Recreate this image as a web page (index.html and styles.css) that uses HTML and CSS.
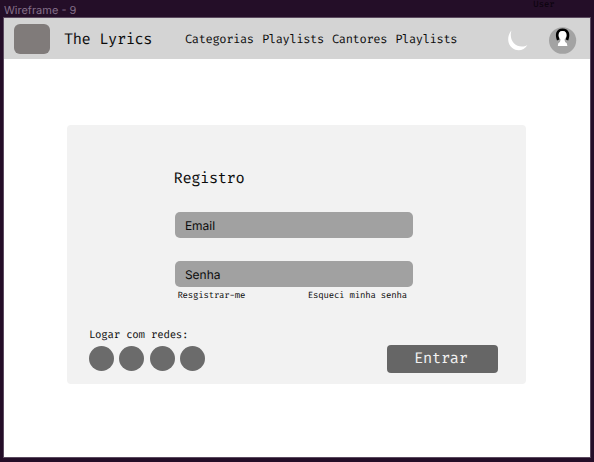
FILE: index.html
```html
<!DOCTYPE html>
<html lang="pt">
<head>
<meta charset="utf-8">
<title>The Lyrics - Registro</title>
<link rel="stylesheet" href="styles.css">
</head>
<body>
<div class="canvas-bar"><span class="frame-name">Wireframe - 9</span><span class="layer-name">User</span></div>
<div class="frame">
  <header class="header">
    <div class="logo"></div>
    <div class="brand">The Lyrics</div>
    <nav class="nav"><a>Categorias</a><a>Playlists</a><a>Cantores</a><a>Playlists</a></nav>
    <svg class="moon" width="20" height="21" viewBox="0 0 20 21"><path d="M3.400.4C-1.200 6-.8 14 4.300 18.100c5 3.900 12 2.400 15.100-3.100C15.300 17.500 9.600 17 5.900 13.300 2.500 9.800 2.200 4.500 3.400.4Z" fill="#fff"/></svg>
    <svg class="avatar" width="28" height="27" viewBox="0 0 28 27"><ellipse cx="13.600" cy="13.500" rx="13.600" ry="13.300" fill="#a3a3a3"/><path d="M9.200 13C7.100 7.500 8.300 2.700 13.600 2.700s6.500 4.800 4.400 10.300" fill="none" stroke="#000" stroke-width="2.600"/><path d="M13.600 4.100c-2.900 0-4.100 2-3.900 4.400.2 1.800.9 2.900 1.800 3.700 0 2-.6 3-2.200 4L8.800 19h9.600l-.6-2.800c-1.600-1-2.200-2-2.200-4 .9-.8 1.600-1.900 1.800-3.700C17.600 6.100 16.400 4.100 13.600 4.100Z" fill="#fff"/></svg>
  </header>
  <main class="main">
    <form class="card">
      <h1>Registro</h1>
      <div class="field">Email</div>
      <div class="field">Senha</div>
      <div class="links"><a>Resgistrar-me</a><a>Esqueci minha senha</a></div>
      <div class="bottom">
        <div class="social">
          <div class="social-label">Logar com redes:</div>
          <div class="dots"><i></i><i></i><i></i><i></i></div>
        </div>
        <div class="submit">Entrar</div>
      </div>
    </form>
  </main>
</div>
</body>
</html>
```
FILE: styles.css
```css
* { box-sizing: border-box; }
body {
  margin: 0;
  width: 594px;
  height: 462px;
  overflow: hidden;
  background: #240e28;
  color: #0c0c0c;
  font-family: "Fira Code", "DejaVu Sans Mono", monospace;
  text-rendering: geometricPrecision;
}
.canvas-bar {
  height: 17px;
  padding: 0 39.500px 0 4px;
  display: flex;
  justify-content: space-between;
}
.frame-name {
  font: 11px/20px Inter, sans-serif;
  color: #85708a;
}
.layer-name {
  font-size: 8.7px;
  line-height: 10px;
  letter-spacing: -.06px;
  color: #09020b;
}
.frame {
  width: 588px;
  height: 441px;
  margin-left: 3px;
  border: 1px solid #5b4a5f;
  background: #fff;
}
.header {
  height: 41px;
  background: #d4d4d4;
  display: flex;
  align-items: center;
  padding: 0 13.500px 0 10.400px;
}
.logo {
  width: 36px;
  height: 30px;
  margin-top: 1px;
  border-radius: 6px;
  background: #807b7a;
}
.brand {
  width: 134.500px;
  padding-left: 13.500px;
  padding-top: 1px;
  font-size: 15px;
  letter-spacing: -.4px;
  white-space: nowrap;
}
.nav {
  display: flex;
  gap: 8.200px;
  flex: 1;
  padding-top: 1px;
  font-size: 11.8px;
  letter-spacing: -.38px;
}
.moon { margin: 3px 21px 0 0; }
.avatar { margin-top: 4px; }
.main { padding: 66px 0 0 63.400px; }
.card {
  width: 458.500px;
  height: 259.400px;
  border-radius: 4px;
  background: #f2f2f2;
  padding: 43px 28px 0 21.500px;
}
h1 {
  margin: 0 0 23px 84.700px;
  font-size: 15px;
  line-height: 21px;
  font-weight: 400;
  letter-spacing: -.4px;
}
.field {
  width: 238px;
  height: 26px;
  margin: 0 0 23px 86px;
  padding-left: 10px;
  border-radius: 5px;
  background: #a1a1a1;
  font: 12px/28px Inter, sans-serif;
}
.field + .field { margin-bottom: 3px; }
.links {
  width: 229.500px;
  margin-left: 88.500px;
  display: flex;
  justify-content: space-between;
  font-size: 8.8px;
  line-height: 12px;
  letter-spacing: -.2px;
}
.bottom {
  margin-top: 27px;
  display: flex;
  justify-content: space-between;
}
.social-label {
  font-size: 10.5px;
  line-height: 13px;
  letter-spacing: -.25px;
}
.dots {
  display: flex;
  gap: 5.500px;
  margin-top: 4.400px;
}
.dots i {
  width: 25px;
  height: 25px;
  border-radius: 50%;
  background: #6b6b6b;
}
.submit {
  width: 111px;
  height: 28px;
  margin-top: 16px;
  padding-right: 3px;
  border-radius: 4px;
  background: #666;
  color: #f2f2f2;
  font-size: 15px;
  line-height: 28px;
  letter-spacing: -.3px;
  text-align: center;
}
```
